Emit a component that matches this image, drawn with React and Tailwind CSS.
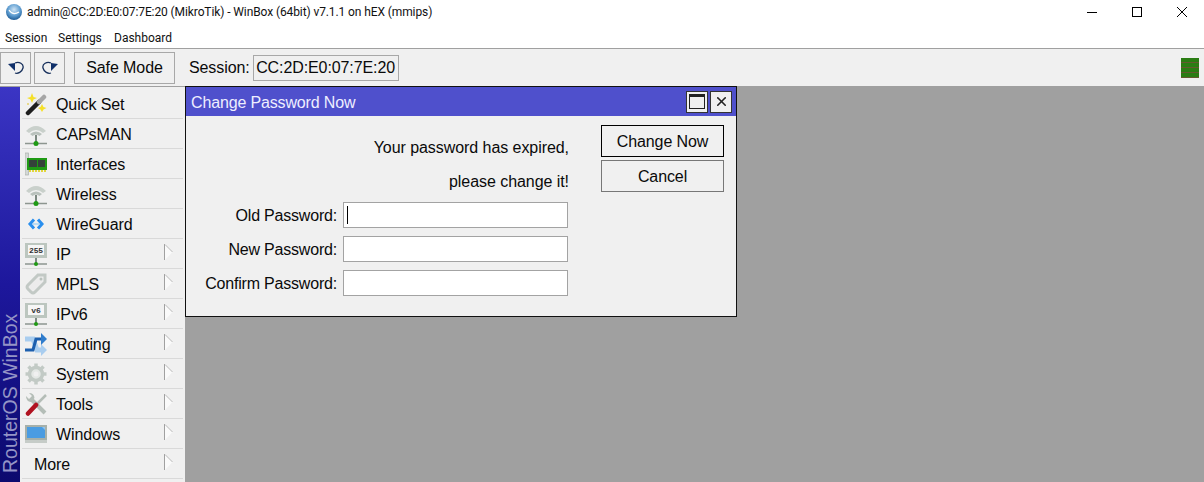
import { X } from 'lucide-react'

const Tower = () => (
  <svg width="22" height="24" viewBox="0 0 22 24">
    <path d="M1 9 Q11 -1 21 9 L18 11 Q11 5 4 11 Z" fill="#c9d0cb" />
    <path d="M5 12 Q11 7 17 12 L14.5 14 Q11 11 7.5 14 Z" fill="#b9c1bc" />
    <path d="M11 13 V21" stroke="#56665c" strokeWidth="1.5" />
    <path d="M0 21.5 H22" stroke="#8d9690" strokeWidth="1.5" />
    <circle cx="11" cy="21.5" r="2.5" fill="#1f9a14" />
  </svg>
)

const Monitor = ({ label }) => (
  <svg width="22" height="24" viewBox="0 0 22 24">
    <rect x="0" y="1" width="22" height="15" fill="#bcc6bf" />
    <rect x="3" y="3" width="16" height="10" fill="#f6f6f6" />
    <text x="11" y="11" textAnchor="middle" fontSize="8" fontFamily="Liberation Mono, monospace" fontWeight="700" fill="#333">{label}</text>
    <path d="M11 16 V22" stroke="#56665c" strokeWidth="1.5" />
    <path d="M0 22 H22" stroke="#8d9690" strokeWidth="1.5" />
    <circle cx="11" cy="22" r="2" fill="#1f9a14" />
  </svg>
)

const icons = {
  wand: (
    <svg width="22" height="24" viewBox="0 0 22 24">
      <path d="M3 21 L14 10" stroke="#1e1e1e" strokeWidth="4.5" strokeLinecap="round" />
      <path d="M14 10 L19 5" stroke="#a6a6a6" strokeWidth="4.5" strokeLinecap="round" />
      <path d="M7 1 L8.5 5 L12 6 L8.5 7.5 L7 11 L5.5 7.5 L2 6 L5.5 5 Z" fill="#f5e02a" />
      <path d="M17 12 L18.5 15 L21.5 16 L18.5 17.5 L17 20 L15.5 17.5 L13 16 L15.5 15 Z" fill="#f5e02a" />
      <rect x="2" y="11" width="2" height="2" fill="#e8d98a" />
    </svg>
  ),
  tower: <Tower />,
  card: (
    <svg width="22" height="24" viewBox="0 0 22 24">
      <rect x="0" y="1" width="3.5" height="22" fill="#d3d8d5" stroke="#a9b0ab" strokeWidth="0.7" />
      <rect x="2" y="6" width="20" height="12" fill="#1f9a14" />
      <rect x="4" y="8" width="8" height="7" fill="#34423a" />
      <rect x="13" y="8" width="7" height="7" fill="#34423a" />
      <path d="M4 19 H22" stroke="#e2d63a" strokeWidth="2" strokeDasharray="2 1" />
    </svg>
  ),
  guard: (
    <svg width="22" height="24" viewBox="0 0 22 24">
      <path d="M9 7.5 L5 12 L9 16.5" fill="none" stroke="#2a8fee" strokeWidth="3" />
      <path d="M13 7.5 L17 12 L13 16.5" fill="none" stroke="#2a8fee" strokeWidth="3" />
      <path d="M8 12 H14" stroke="#a6d4f6" strokeWidth="1.5" />
    </svg>
  ),
  ip: <Monitor label="255" />,
  tag: (
    <svg width="22" height="24" viewBox="0 0 22 24">
      <path d="M3 13 L13 3 L20 3 L20 10 L10 20 Q8 22 6 20 L3 17 Q1 15 3 13 Z" fill="#ececec" stroke="#c2c9c5" strokeWidth="3" />
      <circle cx="16" cy="7" r="1.5" fill="#b9c1bc" />
    </svg>
  ),
  ipv6: <Monitor label="v6" />,
  routing: (
    <svg width="22" height="24" viewBox="0 0 22 24">
      <path d="M0 7 H8 L12 18 H17" fill="none" stroke="#a9cdef" strokeWidth="5" />
      <path d="M16 12 L22 18 L16 24 Z" fill="#a9cdef" />
      <path d="M0 18 H8 L11 7 H17" fill="none" stroke="#1c5fae" strokeWidth="3" />
      <path d="M16 1 L22 7 L16 13 Z" fill="#2f7ccc" />
    </svg>
  ),
  gear: (
    <svg width="22" height="24" viewBox="0 0 22 24">
      <circle cx="11" cy="12" r="6.5" fill="#e4e8e5" stroke="#c2cac5" strokeWidth="3.5" />
      <circle cx="11" cy="12" r="2.5" fill="#f0f0f0" />
      <path d="M11 1.5 V5 M11 19 V22.5 M0.5 12 H4 M18 12 H21.5 M3.5 4.5 L6 7 M16 17 L18.5 19.5 M18.5 4.5 L16 7 M6 17 L3.5 19.5" stroke="#c2cac5" strokeWidth="3.5" />
    </svg>
  ),
  tools: (
    <svg width="22" height="24" viewBox="0 0 22 24">
      <path d="M7 8 L20 21" stroke="#b4bdb7" strokeWidth="4" />
      <path d="M1 4 L4 7 L7 4 L4 1 Q9 1 9.5 6 L6 10 Q1 9.5 1 4 Z" fill="#b4bdb7" />
      <path d="M21 3 L12 12" stroke="#b4bdb7" strokeWidth="2.5" />
      <path d="M3 21.5 L11 13" stroke="#b01220" strokeWidth="4.5" strokeLinecap="round" />
    </svg>
  ),
  windows: (
    <svg width="22" height="24" viewBox="0 0 22 24">
      <rect x="0" y="3" width="22" height="15" fill="#a6b0aa" />
      <rect x="2" y="5" width="18" height="11" fill="#4a9ce2" />
      <path d="M17 5 H20 V8 Z" fill="#8cc4f0" />
      <rect x="0" y="18" width="22" height="3" fill="#c6ccc8" />
    </svg>
  ),
}

const menu = [
  { label: 'Quick Set', icon: 'wand' },
  { label: 'CAPsMAN', icon: 'tower' },
  { label: 'Interfaces', icon: 'card' },
  { label: 'Wireless', icon: 'tower' },
  { label: 'WireGuard', icon: 'guard' },
  { label: 'IP', icon: 'ip', sub: true },
  { label: 'MPLS', icon: 'tag', sub: true },
  { label: 'IPv6', icon: 'ipv6', sub: true },
  { label: 'Routing', icon: 'routing', sub: true },
  { label: 'System', icon: 'gear', sub: true },
  { label: 'Tools', icon: 'tools', sub: true },
  { label: 'Windows', icon: 'windows', sub: true },
  { label: 'More', sub: true },
]

// stripes of the load meter at the right of the toolbar
const meterRows = [0, 1, 2, 3]

const SubArrow = () => (
  <svg width="9" height="16" viewBox="0 0 9 16" className="ml-auto mr-[10px] -mt-[4px]">
    <path d="M1 0 L8.5 8 L1 16 Z" fill="#fafafa" />
    <path d="M0.5 0 V16" stroke="#a0a0a0" />
    <path d="M1 0.5 L8.5 8" stroke="#b8b8b8" />
  </svg>
)

function MenuRow({ item }) {
  return (
    <div className="flex h-[30px] items-center border-b border-[#d9d9d9] text-[16px] tracking-[-0.1px] text-[#0a0a0a]">
      {item.icon ? (
        <>
          <span className="ml-[3px] flex h-[24px] w-[22px] items-center justify-center">{icons[item.icon]}</span>
          <span className="ml-[9px] pt-[2px]">{item.label}</span>
        </>
      ) : (
        <span className="ml-[12px] pt-[2px]">{item.label}</span>
      )}
      {item.sub && <SubArrow />}
    </div>
  )
}

function Field({ label, focused }) {
  return (
    <div className="flex h-[26px] items-center justify-end">
      <span className="mr-[6px] pt-[2px] tracking-[-0.2px]">{label}</span>
      <div className="relative">
        <input type="password" readOnly className="block h-[26px] w-[225px] border border-[#a3a3a3] bg-white outline-none" />
        {focused && <span className="absolute left-[4px] top-[4px] h-[18px] w-[1px] bg-black" />}
      </div>
    </div>
  )
}

export default function App() {
  return (
    <div className="flex h-[482px] w-[1204px] flex-col overflow-hidden bg-white font-['Liberation_Sans',Arial,sans-serif]">
      {/* title bar */}
      <div className="flex h-[26px] items-center font-['Roboto',sans-serif] text-[12px] text-[#111]">
        <svg width="16" height="16" viewBox="0 0 16 16" className="ml-[6px] mr-[5px] mb-[2px]">
          <defs>
            <radialGradient id="logo" cx="50%" cy="35%" r="65%">
              <stop offset="0%" stopColor="#cfe4f4" />
              <stop offset="60%" stopColor="#5d9cd0" />
              <stop offset="100%" stopColor="#1f5c96" />
            </radialGradient>
          </defs>
          <circle cx="8" cy="8" r="8" fill="url(#logo)" />
          <path d="M3 6 Q7 12 13 8" fill="none" stroke="#fff" strokeWidth="1.3" />
        </svg>
        <span className="mb-[2px] tracking-[-0.1px]">admin@CC:2D:E0:07:7E:20 (MikroTik) - WinBox (64bit) v7.1.1 on hEX (mmips)</span>
        <div className="ml-auto mr-[17px] mb-[2px] flex items-center gap-[35px]">
          <div className="h-[1px] w-[10px] bg-black" />
          <div className="h-[10px] w-[10px] border border-black" />
          <svg width="10" height="10" viewBox="0 0 10 10">
            <path d="M0 0 L10 10 M10 0 L0 10" stroke="#000" strokeWidth="1" />
          </svg>
        </div>
      </div>

      {/* menu bar */}
      <div className="flex h-[22px] items-center pl-[5px] pt-[2px] font-['Roboto',sans-serif] text-[12px] text-[#111]">
        <span className="w-[53px]">Session</span>
        <span className="w-[56px]">Settings</span>
        <span>Dashboard</span>
      </div>

      {/* toolbar */}
      <div className="flex h-[39px] items-center border-y border-[#a0a0a0] bg-[#f0f0f0] text-[16px] tracking-[-0.1px] text-[#0a0a0a]">
        <button className="flex h-[32px] w-[31px] items-center justify-center border border-[#a8a8a8]">
          <svg width="16" height="13" viewBox="0 0 16 13">
            <path d="M7 2 C11 0 16 3 15 7 C14 11 10 13 7 12" fill="none" stroke="#17305c" strokeWidth="1.3" />
            <path d="M0 3 L7 2 L7 10 Z" fill="#10306a" />
          </svg>
        </button>
        <button className="ml-[3px] flex h-[32px] w-[31px] items-center justify-center border border-[#a8a8a8]">
          <svg width="17" height="13" viewBox="0 0 17 13">
            <path d="M10 2 C6 0 1 3 2 7 C3 11 7 13 10 12" fill="none" stroke="#17305c" strokeWidth="1.3" />
            <path d="M17 3 L10 2 L10 10 Z" fill="#10306a" />
          </svg>
        </button>
        <button className="ml-[9px] h-[32px] w-[101px] border border-[#a8a8a8]">Safe Mode</button>
        <span className="ml-[14px]">Session:</span>
        <div className="ml-[3px] flex h-[26px] w-[146px] items-center justify-center border border-[#a8a8a8]">CC:2D:E0:07:7E:20</div>
        <div className="ml-auto mr-[5px] flex h-[20px] w-[18px] flex-col bg-[#2b7d14]">
          {meterRows.map((row) => (
            <div key={row} className="h-[5px] border-b border-[#665a30]" />
          ))}
        </div>
      </div>

      <div className="flex min-h-0 flex-1">
        {/* side strip */}
        <div className="relative w-[20px] bg-gradient-to-b from-[#3b35c4] via-[#1d179c] to-[#0c0a6e]">
          <span className="absolute bottom-[9px] left-0 origin-bottom-left translate-x-[20px] -rotate-90 whitespace-nowrap text-[19.5px] leading-[20px] text-[#9494c6]">RouterOS WinBox</span>
        </div>

        {/* sidebar menu */}
        <div className="w-[165px] bg-[#f0f0f0] px-[2px] pt-[2px]">
          {menu.map((item) => <MenuRow key={item.label} item={item} />)}
        </div>

        {/* work area */}
        <div className="flex-1 bg-[#a0a0a0]">
          <div className="-mt-[1px] h-[231px] w-[552px] border border-[#111] bg-[#f0f0f0] text-[16px] text-[#0a0a0a]">
            <div className="flex h-[29px] items-center bg-[#4f50cc] pl-[5px] text-[#eef]">
              <span className="pt-[3px] tracking-[-0.15px]">Change Password Now</span>
              <div className="ml-auto mr-[4px] flex gap-[2px]">
                <div className="flex h-[22px] w-[22px] items-center justify-center border border-[#333] bg-[#f0f0f0]">
                  <div className="h-[15px] w-[16px] border border-[#222] border-t-[3px]" />
                </div>
                <div className="flex h-[22px] w-[22px] items-center justify-center border border-[#333] bg-[#f0f0f0]">
                  <X size={15} strokeWidth={2.5} className="text-[#222]" />
                </div>
              </div>
            </div>
            <div className="flex pt-[9px]">
              <div className="ml-[5px] w-[378px]">
                <div className="flex flex-col pt-[6px] tracking-[-0.06px]">
                  <div className="flex h-[34px] items-center justify-end">Your password has expired,</div>
                  <div className="mb-[3px] flex h-[34px] items-center justify-end">please change it!</div>
                  <div className="mr-[1px] flex flex-col gap-[8px]">
                    <Field label="Old Password:" focused />
                    <Field label="New Password:" />
                    <Field label="Confirm Password:" />
                  </div>
                </div>
              </div>
              <div className="ml-[32px] flex w-[123px] flex-col gap-[3px] tracking-[-0.1px]">
                <button className="h-[32px] border border-black pt-[2px]">Change Now</button>
                <button className="h-[32px] border border-[#777] pt-[2px]">Cancel</button>
              </div>
            </div>
          </div>
        </div>
      </div>
    </div>
  )
}
